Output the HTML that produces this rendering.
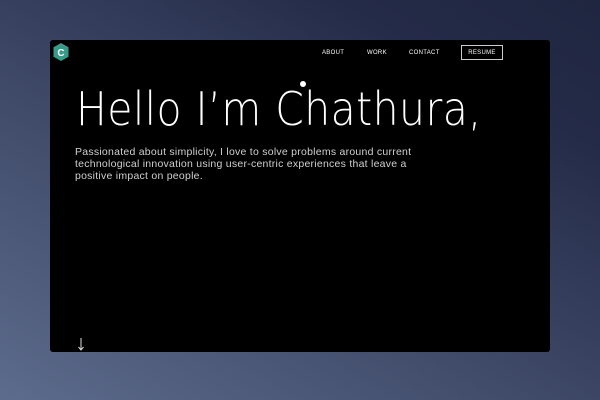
<!DOCTYPE html>
<html><head><style>
html,body{margin:0;width:600px;height:400px;overflow:hidden;}
body{background:linear-gradient(30deg,#5d6b8c 0%,#3d4866 45%,#242b48 80%,#1f2640 100%);font-family:"Liberation Sans",sans-serif;position:relative;}
.win{position:absolute;left:50px;top:40px;width:500px;height:312px;background:#000;border-radius:3px;}
.nav{position:absolute;top:50px;font-size:6px;color:#fff;letter-spacing:0.3px;}
.resume{position:absolute;left:461px;top:45px;width:40px;height:13px;border:1px solid #ccc;color:#fff;font-size:6px;text-align:center;line-height:14px;letter-spacing:0.3px;}
h1{position:absolute;left:76px;top:82px;margin:0;font-size:46px;color:#fff;white-space:nowrap;letter-spacing:0.5px;font-family:"DejaVu Sans","Liberation Sans",sans-serif;transform-origin:left top;transform:scaleX(0.89);font-weight:200;}
p{position:absolute;left:75px;top:146px;margin:0;font-size:10.5px;line-height:12px;color:#d0d0d0;width:340px;letter-spacing:0.25px;}
</style></head><body>
<div class="win"></div>
<svg style="position:absolute;left:52px;top:42px" width="18" height="20" viewBox="0 0 18 20"><polygon points="9,1 16.5,5.2 16.5,14.8 9,19 1.5,14.8 1.5,5.2" fill="#3a9a88"/><text x="9" y="14" font-family="Liberation Sans" font-weight="bold" font-size="10" fill="#fff" text-anchor="middle">C</text></svg>
<div class="nav" style="left:322px">ABOUT</div>
<div class="nav" style="left:367px">WORK</div>
<div class="nav" style="left:409px">CONTACT</div>
<div class="resume">RESUME</div>
<h1>Hello I’m Chathura,</h1>
<div style="position:absolute;left:300px;top:81px;width:6px;height:6px;border-radius:50%;background:#fff"></div>
<p>Passionated about simplicity, I love to solve problems around current technological innovation using user-centric experiences that leave a positive impact on people.</p>
<svg style="position:absolute;left:77px;top:338px" width="8" height="13"><line x1="4" y1="0" x2="4" y2="12" stroke="#ddd" stroke-width="1"/><polyline points="1.5,9 4,12 6.5,9" fill="none" stroke="#ddd" stroke-width="1"/></svg>
</body></html>
